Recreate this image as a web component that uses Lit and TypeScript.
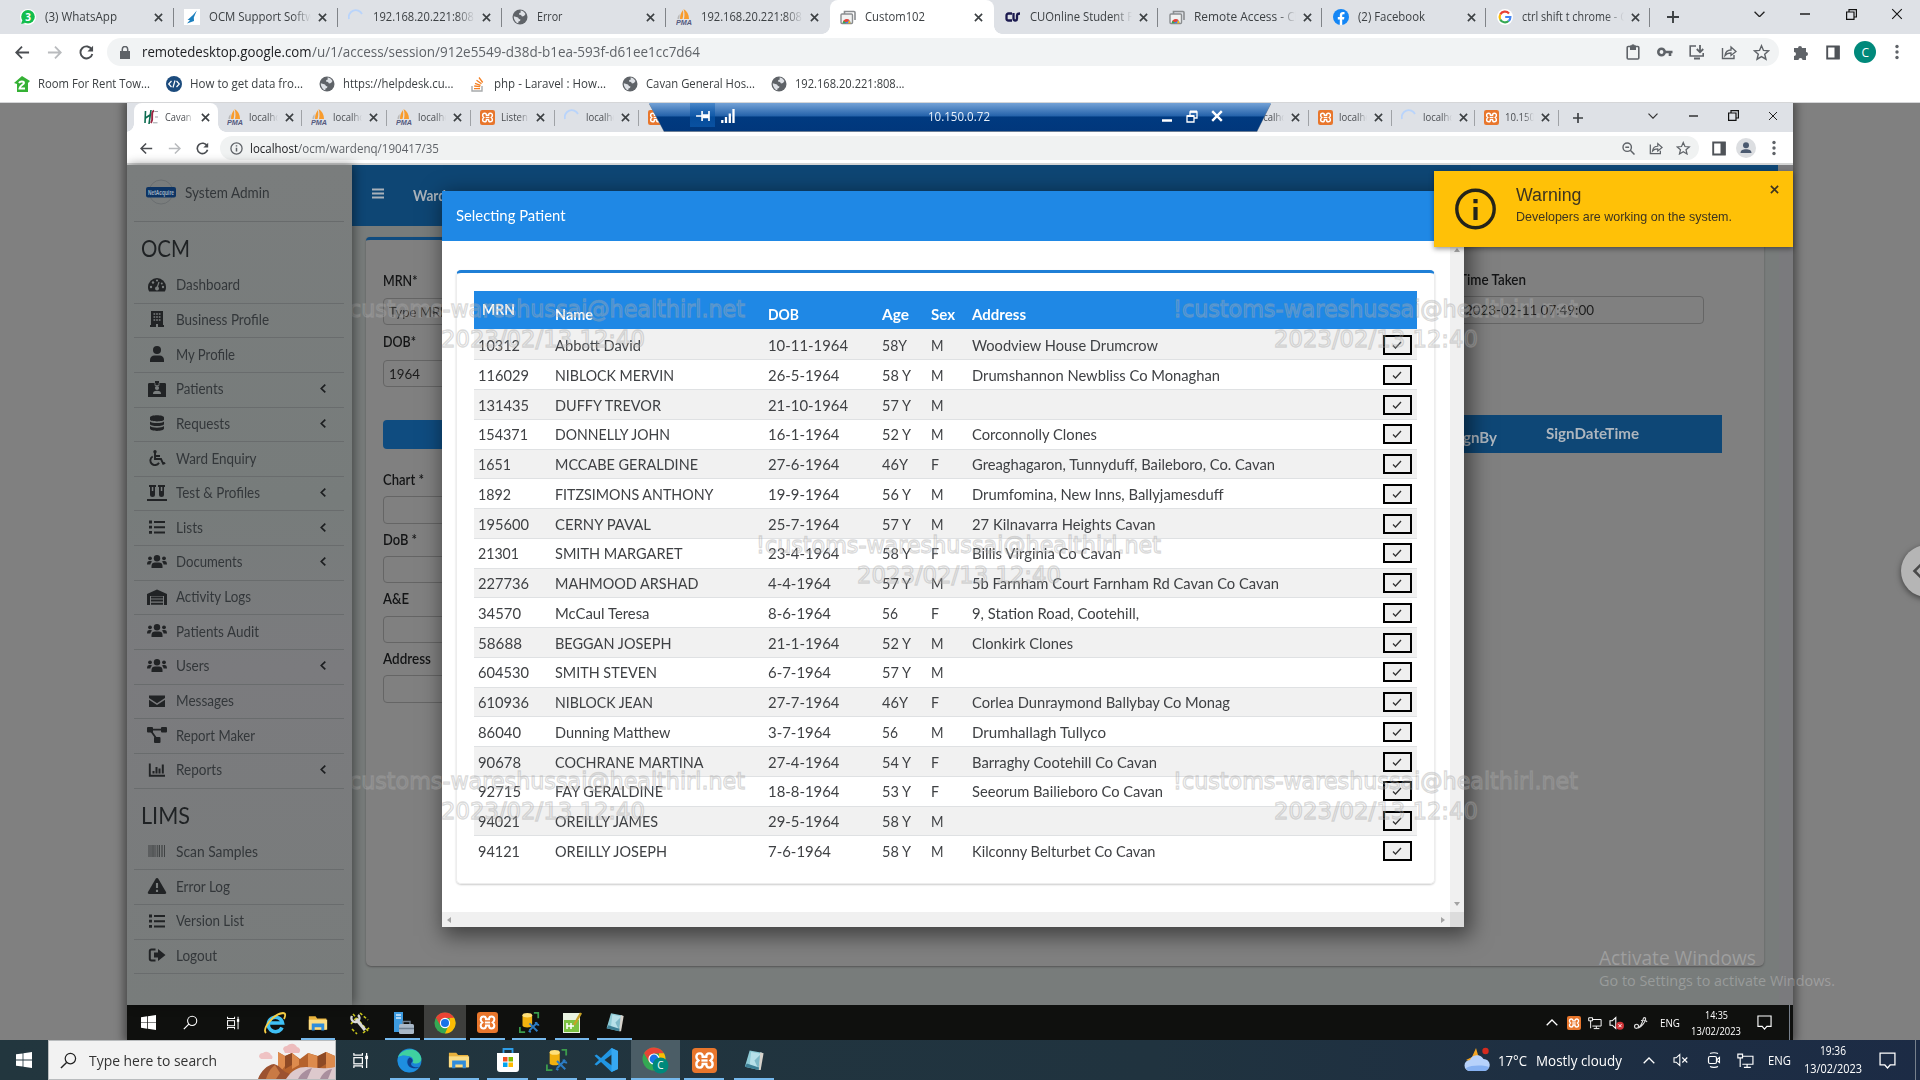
import { LitElement, html, css, svg, nothing } from "lit";
import { customElement } from "lit/decorators.js";
import { classMap } from "lit/directives/class-map.js";
import { styleMap } from "lit/directives/style-map.js";

/** Text set to a known advance width; the scale is worked out after rendering. */
const fit = (text: string, width: number, cls = "") =>
  html`<span class="fit ${cls}" data-w=${width} style=${styleMap({ width: width + "px" })}>${text}</span>`;

const icon = (w: number, h: number, box: string, body: unknown) =>
  html`<svg class="ic" width=${w} height=${h} viewBox=${box} fill="none">${body}</svg>`;

const xampp = (s: number) => icon(s, s, "0 0 24 24", svg`
  <rect width="24" height="24" rx="3.5" fill="#e8762c"/>
  <path d="M7.6 5.2c-2.8 0-3.4 1.500-3.400 3.400s.9 2.600 1.900 3.400c-1 .8-1.900 1.600-1.900 3.500s.7 3.300 3.400 3.300c2 0 2.700-1.700 2.700-3.400h3.400c0 1.700.7 3.400 2.700 3.400 2.700 0 3.400-1.400 3.400-3.300s-.9-2.700-1.900-3.500c1-.8 1.900-1.500 1.900-3.400s-.6-3.400-3.400-3.400c-2 0-2.700 1.500-2.700 3.200h-3.400c0-1.700-.7-3.200-2.700-3.200z" stroke="#fff" stroke-width="2.300"/>
  <path d="M9 12h6" stroke="#fff" stroke-width="2.200"/>`);
const pma = () => icon(16, 16, "0 0 16 16", svg`
  <path d="M4 10C4 6 5 3.500 7 1c.5 3 .3 6.500-.5 9zM8 10c.8-4 .6-7-.5-10C11 2 13 5.500 13 10z" fill="#f89c2e"/><path d="M1.500 10c0-2 .7-3.500 2-5 .2 2 .1 3.500-.3 5z" fill="#b9b9b9"/>
  <text x="0" y="15.500" font-family="Liberation Sans" font-weight="bold" font-style="italic" font-size="6.500" textLength="16" lengthAdjust="spacingAndGlyphs" fill="#555a80">PMA</text>`);
const spinner = () => icon(16, 16, "0 0 16 16", svg`<path d="M1 10a7 7 0 0 1 13-5" stroke="#b9d4fb" stroke-width="1.800"/>`);
const globe = () => icon(16, 16, "0 0 16 16", svg`
  <circle cx="8" cy="8" r="7.500" fill="#5f6368"/><path d="M8.500 1.500c2 .2 4 1.500 5 3.500l-1.500 2-2 .5-1-1.500-2-.5.300-1.500 1.500-.5zM1.800 7.200l4.200 1.300 1 1.500 1.500.5-.5 1.500-1.500.5-.3 1.800C3.800 13.500 1.700 10.700 1.800 7.200z" fill="#dee1e6"/>`);
const remote = () => icon(16, 16, "0 0 16 16", svg`
  <path d="M4.500 11V2.500h9.500a1 1 0 0 1 1 1V11" stroke="#8a8d90" stroke-width="1.600"/><rect x="1" y="5" width="11.500" height="9.500" rx="1" fill="#f1f1f1" stroke="#8a8d90" stroke-width="1.400"/>
  <path d="M3.500 14a3.500 3.500 0 0 1 7 0z" fill="#4285f4"/><path d="M2.800 13.500c.3-3 4-4.500 6.700-2.500L7 13z" fill="#ea4335"/><path d="M2.800 13.500l1-2L6 14.200H3z" fill="#34a853"/><path d="M9 11.200c1 .8 1.500 1.800 1.500 3H8z" fill="#fbbc04"/>`);
const chrome = (s: number) => icon(s, s, "0 0 24 24", svg`
  <circle cx="12" cy="12" r="11.500" fill="#34a853"/><path d="M12 12 2.040 6.250A11.500 11.500 0 0 1 21.960 6.250L22 6.500H12z" fill="#ea4335"/>
  <path d="M21.960 6.250A11.500 11.500 0 0 1 12 23.500L17 12V6.500z" fill="#fbbc04"/><path d="M2.040 6.250 7.200 15l4.800-3z" fill="#ea4335"/>
  <circle cx="12" cy="12" r="5.600" fill="#fff"/><circle cx="12" cy="12" r="4.400" fill="#1a73e8"/>`);
const explorer = (s: number) => icon(s, s, "0 0 24 24", svg`
  <path d="M1 4h8l2 2.500h11V20H1z" fill="#e9b23d"/><path d="M1 8h22v12H1z" fill="#fcdd84"/><path d="M4.500 21v-8.500h15V21H16v-4H8v4z" fill="#2f8ddb"/>`);
const notepad = (s: number) => icon(s, s, "0 0 24 24", svg`
  <path d="M8 1.500 21 4l-3.500 18L3 18.500z" fill="#8ecbd6"/><path d="M9.500 3 20 5l-3 15.500L8 17z" fill="#b7e0e9"/><path d="M13 12 20 5l-3 15.500z" fill="#7fb9c8"/><path d="M3 18.500 17.500 22l1-2.500L5 15z" fill="#3d7f95"/><path d="m19 3.500 3.500 1L19.500 22h-2z" fill="#d7d3cc"/>`);
const dbtools = (s: number) => icon(s, s, "0 0 24 24", svg`
  <path d="M4 3.500v12c0 3 11 3 11 0v-12z" fill="#f2b10f"/><ellipse cx="9.500" cy="3.700" rx="5.500" ry="2.500" fill="#ffe07a"/>
  <path d="M17 1h5v6M1 17v6h6" stroke="#3b9b4c" stroke-width="2"/><path d="m12 21 9-9m-9 1 9 9" stroke="#2c7cc4" stroke-width="2.200"/><path d="M19 11.500a3 3 0 0 0 4 3M11 21.500l2.500 1.500" stroke="#2c7cc4" stroke-width="2"/>`);
const winlogo = (s: number) => icon(s, s, "0 0 16 16", svg`<path d="M0 2.300 6.600 1.400v6.200H0zM7.400 1.300 16 0v7.600H7.400zM0 8.400h6.600v6.200L0 13.700zM7.400 8.400H16V16l-8.600-1.300z" fill="#fff"/>`);
const lens = (s: number, c: string) => icon(s, s, "0 0 18 18", svg`<circle cx="11" cy="7" r="5.500" stroke=${c} stroke-width="1.300"/><path d="M7 11 1 17" stroke=${c} stroke-width="1.500"/>`);
const taskview = (s: number) => icon(s, s, "0 0 18 18", svg`<rect x="2" y="6" width="9" height="6.500" stroke="#fff" stroke-width="1.300"/><path d="M2 1v2.200h9V1M2 17v-2.200h9V17M15.500 1v16" stroke="#fff" stroke-width="1.300"/><rect x="14" y="4" width="3" height="3.500" fill="#fff"/>`);
const cross = (s: number, c = "#3c4043", w = 1.8) => icon(s, s, "0 0 10 10", svg`<path d="m1 1 8 8m0-8-8 8" stroke=${c} stroke-width=${w}/>`);
const dots = (c = "#5f6368") => icon(4, 16, "0 0 4 16", svg`<circle cx="2" cy="2.500" r="1.700" fill=${c}/><circle cx="2" cy="8" r="1.700" fill=${c}/><circle cx="2" cy="13.500" r="1.700" fill=${c}/>`);
const arrow = (s: number, c: string, flip = false) => icon(s, s, "0 0 16 16", svg`<path d=${flip ? "M1 8h13M8.500 1.800 14.700 8l-6.200 6.200" : "M15 8H2M7.500 1.800 1.300 8l6.200 6.200"} stroke=${c} stroke-width="1.900"/>`);
const reload = (s: number) => icon(s, s, "0 0 16 16", svg`<path d="M13.700 5A6.400 6.400 0 1 0 14.200 9.500" stroke="#4a4d51" stroke-width="2"/><path d="M15 .8v6H9z" fill="#4a4d51"/>`);
const star = (s = 17) => icon(s, s, "0 0 18 18", svg`<path d="m9 1.800 2.100 5 5.400.5-4.100 3.500 1.300 5.300L9 13.300l-4.700 2.800 1.300-5.300-4.100-3.500 5.400-.5z" stroke="#5f6368" stroke-width="1.500"/>`);
const share = (s = 16) => icon(s, s, "0 0 16 16", svg`<path d="M1.500 4v10.500H13V11" stroke="#5f6368" stroke-width="1.400"/><path d="M4 11.500c.5-4 3-5.500 6-5.500V3l5 4.500-5 4V9c-2.500 0-4.500.5-6 2.500z" stroke="#5f6368" stroke-width="1.300"/>`);
const panel = () => icon(14, 15, "0 0 14 15", svg`<path d="M1.200 1.500h11.600v12H1.200z" stroke="#4f5358" stroke-width="1.900"/><path d="M8.500 1h5v13h-5z" fill="#4f5358"/>`);
const clipboard = () => icon(14, 16, "0 0 14 16", svg`<rect x="1.200" y="2.500" width="11.600" height="12.500" rx="1" stroke="#5f6368" stroke-width="1.600"/><path d="M4 1.500h6V6H4z" fill="#5f6368"/><circle cx="7" cy="2" r="1.800" fill="#5f6368"/>`);
const key = () => icon(16, 10, "0 0 16 10", svg`<circle cx="4.500" cy="5" r="3.200" stroke="#5f6368" stroke-width="2.600"/><path d="M8 5h7.500M13 5v4" stroke="#5f6368" stroke-width="2.600"/>`);
const install = () => icon(16, 16, "0 0 16 16", svg`<path d="M7 2H1.200v10h13V9" stroke="#5f6368" stroke-width="1.600"/><path d="M5 14.500h6" stroke="#5f6368" stroke-width="2"/><path d="M11 1v6M7.800 5 11 8.300 14.200 5" stroke="#5f6368" stroke-width="1.800"/>`);
const puzzle = () => icon(16, 16, "0 0 16 16", svg`<path d="M1 4h4a2 2 0 1 1 4 0h4v4a2 2 0 1 1 0 4v4H9.500a2 2 0 1 0-4 0H1v-4a2 2 0 1 0 0-4z" fill="#5f6368"/>`);
const down = (w: number, c: string) => icon(w, w * 0.6, "0 0 10 6", svg`<path d="m.5.7 4.500 4.500L9.500.7" stroke=${c} stroke-width="1.200"/>`);
const up = (c = "#fff") => icon(12, 7, "0 0 12 7", svg`<path d="M.7 6.300 6 1l5.300 5.300" stroke=${c} stroke-width="1.300"/>`);
const minus = (w: number) => icon(w, 2, "0 0 10 2", svg`<path d="M0 1h10" stroke="#111" stroke-width="1.400"/>`);
const restore = () => icon(11, 11, "0 0 11 11", svg`<path d="M.6 3h7.400v7.400H.6zM3 3V.6h7.400V8H8" stroke="#111" stroke-width="1.200"/>`);
const notif = (s: number) => icon(s, s, "0 0 16 16", svg`<path d="M1 1h14v11.200h-4.500L8 15l-2.500-2.800H1z" stroke="#fff" stroke-width="1.200"/>`);
const net = (s: number) => icon(s, s, "0 0 16 16", svg`<path d="M5 4h10v7.500H5M9.500 11.500V14M6.500 14.400h6.500M.8 2h4.400v3.500H.8zM3 5.500V14" stroke="#fff" stroke-width="1.100"/>`);
const mute = (red: boolean) => icon(15, 14, "0 0 15 14", svg`<path d="M1 4.800h2.200L6.800 1.500v11L3.200 9.200H1z" stroke="#fff" stroke-width="1.100"/>${red
  ? svg`<circle cx="11" cy="9.700" r="4" fill="#d13438"/><path d="m9.500 8.200 3 3m0-3-3 3" stroke="#fff"/>`
  : svg`<path d="m9.300 4.500 5 5m0-5-5 5" stroke="#fff" stroke-width="1.100"/>`}`);

const glyph: Record<string, unknown> = {
  dash: svg`<path d="M1 10a9 9 0 0 1 18 0c0 1.800-.4 3.200-1.200 4.500H2.200C1.400 13.200 1 11.800 1 10z" fill="#212325"/><g fill="#7b7f7f"><circle cx="4" cy="10" r="1.200"/><circle cx="6" cy="5.500" r="1.200"/><circle cx="10" cy="3.500" r="1.100"/><circle cx="16" cy="10" r="1.200"/><circle cx="14.800" cy="6.500" r="1"/><circle cx="10" cy="11.500" r="2"/></g><path d="m10 11 2-6" stroke="#7b7f7f" stroke-width="1.200"/>`,
  building: svg`<path d="M4 0h12v14h1v2h-6v-3H9v3H3v-2h1z" fill="#212325"/><path d="M6.500 3h7M6.500 6h7M6.500 9h7" stroke="#7b7f7f" stroke-width="1.700" stroke-dasharray="1.700 .950"/>`,
  user: svg`<circle cx="10" cy="4" r="4" fill="#212325"/><path d="M3 16v-2c0-3 2-4.500 4.500-4.500h5C15 9.500 17 11 17 14v2z" fill="#212325"/>`,
  badge: svg`<path d="M1 3.500C1 2.500 1.500 2 2.500 2H8V0h4v2h5.500c1 0 1.500.5 1.500 1.500V16H1z" fill="#212325"/><circle cx="10" cy="7" r="2.100" fill="#7b7f7f"/><path d="M6 13c0-2.500 1-3.300 4-3.300s4 .8 4 3.300z" fill="#7b7f7f"/><path d="M8 2v2.500h4V2" stroke="#7b7f7f" stroke-width=".800"/>`,
  db: svg`<path d="M3 2.500C3-.5 17-.5 17 2.500v2C17 7 3 7 3 4.500zM3 6.500c2 2 12 2 14 0V9c0 2.700-14 2.700-14 0zM3 11c2 2.200 12 2.200 14 0v2.500c0 3.200-14 3.200-14 0z" fill="#212325"/>`,
  wheel: svg`<circle cx="8" cy="1.700" r="1.700" fill="#212325"/><path d="M8 3v6h6l2.200 4.800 2-1M8.500 6H13M5.700 6.500A4.600 4.600 0 1 0 12 12.700" stroke="#212325" stroke-width="1.900"/>`,
  vials: svg`<path d="M2 0h7v2H8v7.500a2.500 2.500 0 0 1-5 0V2H2zM11 0h7v2h-1v7.500a2.500 2.500 0 0 1-5 0V2h-1zM0 14h20v2H0z" fill="#212325"/><path d="M4.800 2h1.500v4H4.800zM13.800 2h1.500v4h-1.500z" fill="#7b7f7f"/>`,
  list: svg`<path d="M2 3h3M2 8.200h3M2 13.400h3" stroke="#212325" stroke-width="2.800"/><path d="M7 3h11M7 8.200h11M7 13.400h11" stroke="#212325" stroke-width="2"/>`,
  users: svg`<circle cx="10" cy="4.300" r="3.200" fill="#212325"/><circle cx="3" cy="4.300" r="1.900" fill="#212325"/><circle cx="17" cy="4.300" r="1.900" fill="#212325"/><path d="M4.500 14v-2c0-2.500 1.500-3.500 3.500-3.500h4c2 0 3.500 1 3.500 3.500v2zM0 10.500C0 8 .8 7 2.500 7c1.500 0 2.200.3 2.700.8C4 8.600 3.600 9.300 3.400 10.500zM20 10.500C20 8 19.200 7 17.500 7c-1.500 0-2.200.3-2.700.8 1.200.8 1.600 1.500 1.800 2.700z" fill="#212325"/>`,
  store: svg`<path d="M0 5 10 .5 20 5v11h-3V7H3v9H0z" fill="#212325"/><path d="M4 8.500h12M4 11.500h12M4 14.800h12" stroke="#212325" stroke-width="2"/>`,
  mail: svg`<path d="M2 2.500h16V5l-8 5.200L2 5zM2 6.700l8 5.200 8-5.200V14H2z" fill="#212325"/>`,
  flow: svg`<rect x="0" y="0" width="6" height="5.500" rx="1" fill="#212325"/><rect x="14" y="0" width="6" height="5.500" rx="1" fill="#212325"/><rect x="7" y="10" width="6.500" height="6" rx="1" fill="#212325"/><path d="M5 2.700h10M4 4l5 7" stroke="#212325" stroke-width="1.800"/>`,
  chart: svg`<path d="M2.800 1.500v12.200H18" stroke="#212325" stroke-width="1.900"/><path d="M6.500 11.500V9M9.500 11.500V5M12.500 11.500v-5M15.800 11.500V2.500" stroke="#212325" stroke-width="2"/>`,
  bar: svg`<path d="M2 2v12M4 2v12M8 2v12M12.500 2v12M17.500 2v12" stroke="#404344" stroke-width="1"/><path d="M6 2v12M10.500 2v12M15 2v12" stroke="#505354" stroke-width="1.700"/>`,
  warn: svg`<path d="M10 0c.7 0 1 .3 1.300.8L19 14c.6 1.200 0 2-1.200 2H2.200C1 16 .4 15.200 1 14L8.700.8C9 .3 9.300 0 10 0z" fill="#212325"/><path d="M10 5v5M10 11.700v2.200" stroke="#7b7f7f" stroke-width="2.100"/>`,
  out: svg`<path d="M8.500 2.500h-4c-1.200 0-1.700.5-1.700 1.700v7.500c0 1.200.5 1.700 1.700 1.700h4" stroke="#212325" stroke-width="2"/><path d="M7 5.500h4V2l7.500 6-7.500 6v-3.500H7z" fill="#212325"/>`,
};

type Item = [string, string, number, boolean?];
const OCM: Item[] = [
  ["dash", "Dashboard", 64], ["building", "Business Profile", 93], ["user", "My Profile", 59], ["badge", "Patients", 47.5, true],
  ["db", "Requests", 54, true], ["wheel", "Ward Enquiry", 80.5], ["vials", "Test & Profiles", 84, true], ["list", "Lists", 27, true],
  ["users", "Documents", 66.5, true], ["store", "Activity Logs", 75], ["users", "Patients Audit", 83], ["users", "Users", 33.5, true],
  ["mail", "Messages", 58], ["flow", "Report Maker", 79], ["chart", "Reports", 46, true],
];
const LIMS: Item[] = [["bar", "Scan Samples", 82], ["warn", "Error Log", 54], ["list", "Version List", 68], ["out", "Logout", 41]];

type Row = [string, number, string, number, string, number, string, number, string, string, number];
const ROWS: Row[] = [
  ["10312", 42, "Abbott David", 86, "10-11-1964", 80, "58Y", 25, "M", "Woodview House Drumcrow", 186],
  ["116029", 51, "NIBLOCK MERVIN", 119, "26-5-1964", 71.5, "58 Y", 29, "M", "Drumshannon Newbliss Co Monaghan", 248],
  ["131435", 51, "DUFFY TREVOR", 106, "21-10-1964", 80, "57 Y", 29, "M", "", 0],
  ["154371", 50, "DONNELLY JOHN", 115, "16-1-1964", 71.5, "52 Y", 29, "M", "Corconnolly Clones", 125],
  ["1651", 33, "MCCABE GERALDINE", 143, "27-6-1964", 71.5, "46Y", 26, "F", "Greaghagaron, Tunnyduff, Baileboro, Co. Cavan", 303],
  ["1892", 33, "FITZSIMONS ANTHONY", 158.5, "19-9-1964", 71.5, "56 Y", 29, "M", "Drumfomina, New Inns, Ballyjamesduff", 251.5],
  ["195600", 51, "CERNY PAVAL", 96, "25-7-1964", 71.5, "57 Y", 29, "M", "27 Kilnavarra Heights Cavan", 183.5],
  ["21301", 41, "SMITH MARGARET", 127.5, "23-4-1964", 71.5, "58 Y", 29, "F", "Billis Virginia Co Cavan", 149],
  ["227736", 51, "MAHMOOD ARSHAD", 143.5, "4-4-1964", 63, "57 Y", 29, "M", "5b Farnham Court Farnham Rd Cavan Co Cavan", 307],
  ["34570", 43, "McCaul Teresa", 94.5, "8-6-1964", 63, "56", 16, "F", "9, Station Road, Cootehill,", 167],
  ["58688", 44, "BEGGAN JOSEPH", 116.5, "21-1-1964", 71.5, "52 Y", 29, "M", "Clonkirk Clones", 101],
  ["604530", 51, "SMITH STEVEN", 102, "6-7-1964", 63, "57 Y", 29, "M", "", 0],
  ["610936", 51, "NIBLOCK JEAN", 98, "27-7-1964", 71.5, "46Y", 26, "F", "Corlea Dunraymond Ballybay Co Monag", 258],
  ["86040", 43, "Dunning Matthew", 115.5, "3-7-1964", 63, "56", 16, "M", "Drumhallagh Tullyco", 134],
  ["90678", 43, "COCHRANE MARTINA", 148.5, "27-4-1964", 71.5, "54 Y", 29, "F", "Barraghy Cootehill Co Cavan", 185],
  ["92715", 43, "FAY GERALDINE", 108, "18-8-1964", 71.5, "53 Y", 29, "F", "Seeorum Bailieboro Co Cavan", 191],
  ["94021", 42, "OREILLY JAMES", 103, "29-5-1964", 71.5, "58 Y", 29, "M", "", 0],
  ["94121", 42, "OREILLY JOSEPH", 112, "7-6-1964", 63, "58 Y", 29, "M", "Kilconny Belturbet Co Cavan", 183.5],
];

const MARKS = [[543, 308], [1376, 308], [959, 544], [543, 780], [1376, 780]];

@customElement("app-root")
export class AppRoot extends LitElement {
  static styles = css`
    :host { display: block; width: 1920px; height: 1080px; overflow: hidden; position: relative; font-family: "Open Sans", "Noto Sans", sans-serif; color: #3c4043; }
    * { box-sizing: border-box; }
    .ic { display: block; flex: none; }
    .fit { display: inline-block; white-space: pre; transform-origin: 0 50%; flex: none; }
    .screen { display: flex; flex-direction: column; height: 1080px; }
    .row { display: flex; align-items: center; }
    .cell { display: flex; align-items: center; justify-content: center; flex: none; }

    .tabs { height: 34px; background: #dee1e6; padding-left: 9.5px; display: flex; font-size: 12px; flex: none; }
    .tab { width: 164.1px; height: 34px; display: flex; align-items: center; padding-left: 10.5px; position: relative; flex: none; }
    .tab .name { width: 102px; margin-left: 9px; overflow: hidden; white-space: pre; -webkit-mask-image: linear-gradient(90deg, #000 82%, transparent); line-height: 20px; }
    .tab .x { margin-left: 7px; }
    .tab.sep::after { content: ""; position: absolute; right: 0; top: 8px; width: 1px; height: 19px; background: #808388; }
    .tab.on { background: #fff; border-radius: 8px 8px 0 0; }
    .tab.on::before, .tab.on::after { content: ""; position: absolute; bottom: 0; width: 8px; height: 8px; }
    .tab.on::before { left: -8px; background: radial-gradient(circle at 0 0, transparent 7.5px, #fff 8px); }
    .tab.on::after { right: -8px; background: radial-gradient(circle at 100% 0, transparent 7.5px, #fff 8px); }
    .plus { width: 45px; }
    .ctl { width: 46px; height: 28px; }
    .gap { flex: 1; }

    .bar { height: 36px; background: #fff; display: flex; align-items: center; padding-left: 6px; flex: none; }
    .nav { width: 32.3px; }
    .omni { height: 28px; width: 1672px; margin-left: 4.5px; border-radius: 14px; background: #f1f3f4; display: flex; align-items: center; font-size: 14px; padding: 0 2px 0 10px; color: #5f6368; }
    .omni .fit { margin-top: -2px; }
    .omni .host { color: #202124; }
    .omni .lock { width: 16px; margin-right: 9px; }
    .b32 { width: 32px; height: 28px; }
    .ava { width: 22px; height: 22px; border-radius: 50%; background: #00897b; color: #fff; font-size: 12px; }
    .marks { height: 33px; background: #fff; border-bottom: 1px solid #d5d6d8; font-size: 12px; display: flex; align-items: center; padding: 0 0 4px 14px; flex: none; }
    .mark { display: flex; align-items: center; gap: 8.2px; margin-right: 15.9px; line-height: 18px; }

    .desk { flex: none; height: 937px; background: #808080; padding-left: 127px; position: relative; overflow: hidden; }
    .win { width: 1666px; height: 937px; display: flex; flex-direction: column; box-shadow: 0 0 9px 3px rgba(0, 0, 0, .45); position: relative; overflow: hidden; }
    .tabs.in { height: 29px; padding-left: 7px; }
    .in .tab { width: 84.2px; height: 29px; padding: 0 0 1px 9px; }
    .in .tab.r { width: 83.4px; }
    .in .tab .name { width: 28.5px; margin-left: 6px; font-size: 11px; color: #4a4d51; -webkit-mask-image: linear-gradient(90deg, #000 65%, transparent); }
    .in .tab .x { margin-left: 7px; }
    .in .tab.sep::after { top: 7px; height: 16px; background: #9fa2a6; }
    .in .ctl { width: 40px; height: 25px; }
    .in .fill { width: 502px; flex: none; }
    .bar.in2 { height: 33px; padding-left: 5px; border-bottom: 2px solid #d4d5d5; padding-top: 1px; }
    .in2 .nav { width: 28px; }
    .in2 .omni { height: 24px; width: 1479px; margin-left: 4px; font-size: 12.5px; background: #f0f2f2; padding: 0 2px 0 8px; }
    .in2 .omni .fit { margin-top: 0; }
    .in2 .b28 { width: 27.5px; height: 24px; }

    .page { height: 840px; display: flex; background: #787c7b; flex: none; font-family: Lato, "Open Sans", sans-serif; color: #2e3133; position: relative; }
    .side { width: 225px; background: linear-gradient(#7a7d7d, #777c7b 40%, #7b7b7e 60%, #787c7b); padding: 0 8px 0 7px; box-shadow: 2px 0 10px rgba(0, 0, 0, .45); z-index: 1; }
    .brand { height: 57px; border-bottom: 1.5px solid #686b6c; display: flex; align-items: center; gap: 9px; padding: 0 0 2px 12px; font-size: 15px; color: #33373a; }
    .sec { height: 47px; padding: 9px 0 0 7px; font-size: 24px; line-height: 34px; color: #1f2224; }
    .item { height: 34.65px; border-bottom: 1.5px solid #696c6d; display: flex; align-items: center; padding: 0 9px 2px 13px; font-size: 14.5px; color: #33373a; }
    .item .ic { margin-right: 9px; }
    .item .go .ic { margin: 0; }
    .item .go { margin: 0 9px 0 auto; }
    .main { flex: 1; display: flex; flex-direction: column; }
    .top { height: 61px; width: 1426px; background: #0e4674; display: flex; align-items: center; padding: 0 0 4px 20px; gap: 28.5px; color: #aab2ba; font-weight: 700; font-size: 15px; flex: none; }
    .card { margin: 11px 0 0 14px; width: 1398px; height: 729px; background: #808080; border-top: 3px solid #0f4c80; border-radius: 4px 4px 5px 5px; box-shadow: 0 1px 2px #555; display: flex; justify-content: space-between; padding: 30px 42px 0 17px; flex: none; }
    .form { width: 300px; font-size: 14px; }
    .lbl { font-weight: 600; color: #131415; font-size: 14.5px; height: 19px; line-height: 18px; padding-left: 0; }
    .box { height: 27.5px; border: 1px solid #656565; border-radius: 4px; padding: 0 5px; display: flex; align-items: center; color: #1c1c1c; }
    .go-btn { height: 29px; background: #0f4c80; border-radius: 4px; }
    .right { width: 360px; font-size: 14px; display: flex; flex-direction: column; }
    .strip { height: 38px; width: 360px; background: #0e4776; color: #aeb6be; font-weight: 700; font-size: 16px; display: flex; }
    .track { position: absolute; right: 0; top: 0; width: 14.5px; height: 840px; background: #7a7a7d; }

    .modal { position: absolute; left: 442px; top: 88px; width: 1022px; height: 736px; background: #fff; box-shadow: 4px 6px 20px 3px rgba(0, 0, 0, .5); font-family: Lato, "Open Sans", sans-serif; display: grid; grid-template-columns: 1fr 14.5px; grid-template-rows: 50px 1fr 15px; }
    .mhead { grid-column: 1 / 3; background: #1f88e5; color: #fff; font-size: 15px; padding: 0 0 3px 14px; display: flex; align-items: center; }
    .mbody { padding: 28.5px 15px 0 14px; overflow: hidden; }
    .panel { height: 614.5px; border: 1px solid #ededed; border-top: 3px solid #1f7fd6; border-radius: 5px; box-shadow: 0 1px 2px #ccc; padding: 18px 17px 0 17px; }
    .sv, .sh { background: #f0f0f0; display: flex; justify-content: space-between; align-items: center; }
    .sv { flex-direction: column; padding: 6px 0 5px; }
    .sh { padding: 0 4px; }
    .corner { background: #dcdcdc; }
    .tr { display: grid; grid-template-columns: 77px 212.5px 114px 49px 41.5px 1fr 33.5px; height: 29.75px; border-bottom: 1.2px solid #dfe1e3; padding-left: 4.4px; align-items: center; font-size: 15px; color: #3f4144; }
    .tr.odd { background: #f1f1f1; }
    .tr.first { height: 31.9px; padding-top: 2px; }
    .tr.last { border: 0; }
    .th { display: grid; grid-template-columns: 73px 212.5px 114px 49px 41.5px 1fr 33px; height: 38px; padding: 8px 0 0 8.4px; background: #1f88e5; color: #fff; font-weight: 700; font-size: 15px; align-items: center; }
    .th .up { margin-top: -9px; }
    .pick { width: 28.5px; height: 20px; border: 2px solid #000; background: #efefef; display: flex; align-items: center; justify-content: center; padding: 0; }

    .toast { position: absolute; left: 1434px; top: 68px; width: 359px; height: 76px; background: #ffc107; box-shadow: 0 2px 5px rgba(0, 0, 0, .4); font-family: "Liberation Sans", sans-serif; color: #3d3420; display: flex; padding: 17px 14px 0 21px; }
    .toast .txt { margin-left: 19.5px; flex: 1; margin-top: -3px; }
    .toast .ttl { font-size: 18px; line-height: 20px; height: 23px; }
    .toast .sub { font-size: 13px; line-height: 18px; }
    .toast .close { margin-top: -3px; }

    .rdp { position: absolute; left: 649px; top: 0; width: 622px; height: 29px; filter: drop-shadow(0 1px 0 #6d7f96); }
    .rdpin { height: 28px; clip-path: polygon(0 0, 100% 0, calc(100% - 14px) 100%, 15px 100%); background: linear-gradient(#74a2d6 0, #2563ab 46%, #003a80 50%, #01377c); display: grid; grid-template-columns: 41px 25px 25px 1fr 25px 25px 25px 42px; align-items: center; color: #e8f0fa; padding-bottom: 2px; }
    .pin { background: linear-gradient(rgba(0, 90, 180, .35), rgba(10, 84, 165, .9)); height: 24px; align-self: start; padding-top: 2px; }
    .rdpt { text-align: center; font-size: 12px; padding-left: 24px; }

    .tb1 { height: 35px; background: #0f100e; display: flex; align-items: center; position: relative; color: #fff; flex: none; }
    .tb1 .cell { width: 42.4px; height: 35px; }
    .tb1 .cell.run, .tb2 .cell.run { background: linear-gradient(#76b9ed, #76b9ed) bottom / 82% 2px no-repeat; }
    .tb1 .cell.act { background: linear-gradient(#76b9ed, #76b9ed) bottom / 100% 2px no-repeat, #3e3f3d; }
    .tray { margin-left: auto; display: flex; align-items: center; }
    .clock { text-align: center; display: flex; flex-direction: column; align-items: center; }
    .tb1 .clock { font-size: 11px; line-height: 15.5px; width: 56px; }
    .tb2 { height: 40px; background: linear-gradient(90deg, #22363e, #20333f 60%, #1c2b45); display: flex; align-items: center; color: #fff; flex: none; }
    .tb2 .start { width: 48px; }
    .search { width: 288px; height: 40px; background: #f2f2f2; border: 1px solid #b9bcbe; display: flex; align-items: center; padding-left: 11px; color: #333; font-size: 15px; gap: 12px; }
    .search .art { margin-left: auto; }
    .tb2 .app { width: 49.15px; height: 40px; }
    .tb2 .cell.act { background: linear-gradient(#76b9ed, #76b9ed) bottom / 100% 2px no-repeat, #4b5d66; }
    .tb2 .tray { font-size: 15px; }
    .tb2 .clock { font-size: 12px; line-height: 18.5px; width: 60px; }
    .peek { width: 1px; background: #77808c; }

    .over { position: absolute; left: 0; top: 0; width: 1920px; height: 1080px; pointer-events: none; }
    .side-toggle { position: absolute; left: 1901px; top: 442px; width: 52px; height: 52px; border-radius: 50%; background: #b5b5b5; box-shadow: 0 2px 6px rgba(0, 0, 0, .5); padding: 17px 0 0 11px; }
  `;

  protected firstUpdated() {
    this.renderRoot.querySelectorAll<HTMLElement>(".fit").forEach((el) => {
      const want = Number(el.dataset.w);
      el.style.width = "max-content";
      const have = el.getBoundingClientRect().width;
      el.style.width = want + "px";
      if (have) el.style.transform = `scaleX(${want / have})`;
    });
  }

  private tab(ic: unknown, text: string, w: number, opt = "") {
    return html`<div class="tab ${opt}">${ic}<span class="name">${fit(text, w)}</span><span class="x">${cross(9)}</span></div>`;
  }

  private chromeTop() {
    const wa = icon(16, 16, "0 0 16 16", svg`<circle cx="8" cy="8" r="8" fill="#fff"/><circle cx="8" cy="7.800" r="6.800" fill="#12bd4c"/><path d="m1.200 15 1.200-4 3 3z" fill="#12bd4c"/><text x="8" y="11.500" font-size="10" font-weight="bold" text-anchor="middle" fill="#fff" font-family="Open Sans">3</text>`);
    const ocm = icon(16, 16, "0 0 16 16", svg`<rect width="16" height="16" fill="#fff"/><path d="M12.800 1.500 9.800 8.500 10 12 3 14.500l3-3.500H3.500L9 6z" fill="#1c7fbe"/>`);
    const cu = icon(16, 16, "0 0 16 16", svg`<path d="M7 4.500H3.500A2 2 0 0 0 1.500 6.500v3a2 2 0 0 0 2 2H7M8.500 4v5.500c0 1.300.7 2 1.800 2s1.700-.7 1.700-2V6.500c0-1.300.8-2 3-2" stroke="#1c1a4f" stroke-width="2.300"/>`);
    const fb = icon(16, 16, "0 0 16 16", svg`<circle cx="8" cy="8" r="8" fill="#1486f5"/><path d="M6.800 16v-5.500h-2V8h2V6.200c0-2.200 1.300-3.300 3.200-3.300l1.500.1v2.200h-1c-1 0-1.300.5-1.300 1.200V8h2.200l-.4 2.500H9.200V16z" fill="#fff"/>`);
    const goog = icon(16, 16, "0 0 16 16", svg`<circle cx="8" cy="8" r="8" fill="#fff"/><g stroke-width="2.200"><path d="M12 4.400A5.400 5.400 0 0 0 3.200 5.600" stroke="#ea4335"/><path d="M3.200 5.600a5.400 5.400 0 0 0 0 4.800" stroke="#fbbc04"/><path d="M3.200 10.400a5.400 5.400 0 0 0 8.400 1.600" stroke="#34a853"/><path d="M11.600 12a5.200 5.200 0 0 0 1.800-4H8.200" stroke="#4285f4"/></g>`);
    return html`
      <div class="tabs">
        ${this.tab(wa, "(3) WhatsApp", 72, "sep")}${this.tab(ocm, "OCM Support Softw", 105, "sep")}${this.tab(spinner(), "192.168.20.221:808", 101, "sep")}
        ${this.tab(globe(), "Error", 25.5, "sep")}${this.tab(pma(), "192.168.20.221:808", 101)}${this.tab(remote(), "Custom102", 60, "on")}
        ${this.tab(cu, "CUOnline Student P", 104, "sep")}${this.tab(remote(), "Remote Access - Ch", 108, "sep")}${this.tab(fb, "(2) Facebook", 67, "sep")}${this.tab(goog, "ctrl shift t chrome - G", 106, "sep")}
        <div class="cell plus">${icon(12, 12, "0 0 12 12", svg`<path d="M6 0v12M0 6h12" stroke="#3c4043" stroke-width="1.900"/>`)}</div>
        <div class="gap"></div>
        <div class="cell ctl">${down(11, "#222")}</div><div class="cell ctl">${minus(10)}</div><div class="cell ctl">${restore()}</div><div class="cell ctl">${cross(12, "#111", 0.9)}</div>
      </div>
      <div class="bar">
        <div class="cell nav">${arrow(15, "#4a4d51")}</div><div class="cell nav">${arrow(15, "#b9bbbe", true)}</div><div class="cell nav">${reload(15)}</div>
        <div class="omni">
          <span class="cell lock">${icon(10, 13, "0 0 10 13", svg`<path d="M0 5h10v8H0z" fill="#5f6368"/><path d="M2.300 5V3.200a2.700 2.700 0 0 1 5.400 0V5" stroke="#5f6368" stroke-width="1.500"/>`)}</span>
          ${fit("remotedesktop.google.com", 169.5, "host")}${fit("/u/1/access/session/912e5549-d38d-b1ea-593f-d61ee1cc7d64", 388)}
          <span class="gap"></span>
          ${[clipboard(), key(), install(), share(), star()].map((i) => html`<span class="cell b32">${i}</span>`)}
        </div>
        <div class="row gap" style="padding-left:6px">
          <span class="cell b32">${puzzle()}</span><span class="cell b32">${panel()}</span><span class="cell b32"><span class="cell ava">C</span></span><span class="cell b32">${dots()}</span>
        </div>
      </div>`;
  }

  private bookmarks() {
    const house = icon(16, 16, "0 0 16 16", svg`<path d="M0 7 8 0l8 5-2 2v9H3V8z" fill="#35b135"/><path d="M5 7c1-2 5-2 5 0 0 1.500-4 2.500-4.500 5.500H11" stroke="#fff" stroke-width="1.900"/>`);
    const code = icon(16, 16, "0 0 16 16", svg`<circle cx="8" cy="8" r="8" fill="#1c4b7d"/><path d="M5.500 5 2.700 8l2.800 3M10.500 5l2.800 3-2.800 3M9 4.500l-2 7" stroke="#fff" stroke-width="1.200"/>`);
    const so = icon(16, 16, "0 0 16 16", svg`<path d="M2 10v5h10v-5" stroke="#a8aaac" stroke-width="1.400"/><path d="M4 12.700h6M4.200 10l6 .7M5 7.300l5.600 2M6.500 4.300l5 3.500M9 1.500l3.700 5" stroke="#f48024" stroke-width="1.300"/>`);
    const list: [unknown, string, number][] = [
      [house, "Room For Rent Tow...", 112], [code, "How to get data fro...", 113], [globe(), "https://helpdesk.cu...", 110.5],
      [so, "php - Laravel : How...", 112], [globe(), "Cavan General Hos...", 109], [globe(), "192.168.20.221:808...", 109.5]];
    return html`<div class="marks">${list.map(([i, t, w]) => html`<div class="mark">${i}${fit(t, w)}</div>`)}</div>`;
  }

  private innerTop() {
    const hse = icon(16, 16, "0 0 16 16", svg`<path d="M2.500 2 2 14M2.500 9l4.500-3M8 1 6 15" stroke="#0b6b4f" stroke-width="1.600"/><path d="M11 1.500C6.500 4 11.500 8 8 14" stroke="#9b2743" stroke-width="1.900"/><path d="M11.500 2.500h3.500M12 8h3M10 13.800h4.500" stroke="#9aa0a6" stroke-width="1"/>`);
    return html`
      <div class="tabs in">
        ${this.tab(hse, "Cavan ", 29, "on")}${this.tab(pma(), "localho", 32, "sep")}${this.tab(pma(), "localho", 32, "sep")}${this.tab(pma(), "localho", 32, "sep")}
        ${this.tab(xampp(15), "Listen", 27, "sep")}${this.tab(spinner(), "localho", 32, "sep")}${this.tab(xampp(15), "localho", 32)}
        <div class="fill"></div>
        ${this.tab(xampp(15), "localho", 32, "sep r")}${this.tab(xampp(15), "localho", 32, "sep r")}${this.tab(spinner(), "localho", 32, "sep r")}${this.tab(xampp(15), "10.150", 30, "sep r")}
        <div class="cell" style="width:38px">${icon(10, 10, "0 0 12 12", svg`<path d="M6 0v12M0 6h12" stroke="#3c4043" stroke-width="2"/>`)}</div>
        <div class="gap"></div>
        <div class="cell ctl">${down(10, "#333")}</div><div class="cell ctl">${minus(9)}</div><div class="cell ctl">${restore()}</div><div class="cell ctl">${cross(10, "#222", 1)}</div>
      </div>
      <div class="bar in2">
        <div class="cell nav">${arrow(13, "#4a4d51")}</div><div class="cell nav">${arrow(13, "#b9bbbe", true)}</div><div class="cell nav">${reload(13)}</div>
        <div class="omni">
          <span class="cell lock">${icon(13, 13, "0 0 14 14", svg`<circle cx="7" cy="7" r="6" stroke="#5f6368" stroke-width="1.400"/><path d="M7 6.300v4M7 3.500v1.400" stroke="#5f6368" stroke-width="1.600"/>`)}</span>
          <span style="margin-left:-3px">${fit("localhost", 48, "host")}</span>${fit("/ocm/wardenq/190417/35", 141)}
          <span class="gap"></span>
          <span class="cell b28">${icon(13, 13, "0 0 13 13", svg`<circle cx="5.200" cy="5.200" r="4.200" stroke="#5f6368" stroke-width="1.400"/><path d="M8.300 8.300 12.500 12.500M3.300 5.200h3.800" stroke="#5f6368" stroke-width="1.500"/>`)}</span>
          <span class="cell b28">${share(14)}</span><span class="cell b28">${star(14.5)}</span>
        </div>
        <div class="row gap" style="padding-left:6px">
          <span class="cell b28">${panel()}</span><span class="cell b28">${icon(20, 20, "0 0 20 20", svg`<circle cx="10" cy="10" r="10" fill="#dcdee1"/><circle cx="10" cy="7.200" r="3" fill="#4b5a70"/><path d="M4.500 15c0-3 2.500-3.800 5.500-3.800s5.500.8 5.500 3.800z" fill="#4b5a70"/>`)}</span><span class="cell b28">${dots()}</span>
        </div>
      </div>`;
  }

  private items(list: Item[]) {
    return list.map(([g, t, w, sub]) => html`<div class="item">${icon(20, 16, "0 0 20 16", glyph[g])}${fit(t, w)}${sub
      ? html`<span class="go">${icon(6, 9, "0 0 6 9", svg`<path d="M5.300.7 1.300 4.500l4 3.800" stroke="#1c1e20" stroke-width="1.700"/>`)}</span>` : nothing}</div>`);
  }

  private page() {
    return html`<div class="page">
      <div class="side">
        <div class="brand">${icon(30, 26, "0 0 30 26", svg`<circle cx="15" cy="13" r="12" stroke="#6a6e70" stroke-width="1"/><rect y="8" width="30" height="10.500" rx="2" fill="#0d3464"/><text x="2" y="16" font-family="Liberation Sans" font-weight="bold" font-size="7.500" textLength="26" lengthAdjust="spacingAndGlyphs" fill="#9fb0c0">NetAcquire</text>`)}${fit("System Admin", 84.5)}</div>
        <div class="sec">${fit("OCM", 49)}</div>${this.items(OCM)}
        <div class="sec">${fit("LIMS", 49)}</div>${this.items(LIMS)}
      </div>
      <div class="main">
        <div class="top">${icon(12, 11, "0 0 12 11", svg`<path d="M0 1.500h12M0 5.500h12M0 9.500h12" stroke="#aab2ba" stroke-width="1.900"/>`)}<span style="padding-top:3px">${fit("Ward", 33)}</span></div>
        <div class="card">
          <div class="form">
            <div class="lbl" style="margin-top:1.5px">${fit("MRN*", 34.5)}</div><div class="box" style="margin-top:7px;color:#333">${fit("Type MRN", 61)}</div>
            <div class="lbl" style="margin-top:8px">${fit("DOB*", 33)}</div><div class="box" style="margin-top:7.5px">${fit("1964", 31)}</div>
            <div class="go-btn" style="margin-top:33px"></div>
            <div class="lbl" style="margin-top:22px">${fit("Chart *", 41)}</div><div class="box" style="margin-top:6px"></div>
            <div class="lbl" style="margin-top:7px">${fit("DoB *", 34)}</div><div class="box" style="margin-top:6px"></div>
            <div class="lbl" style="margin-top:6.5px">${fit("A&E", 26)}</div><div class="box" style="margin-top:7px"></div>
            <div class="lbl" style="margin-top:7px">${fit("Address", 48)}</div><div class="box" style="margin-top:6px"></div>
          </div>
          <div class="right">
            <div class="lbl" style="padding:1px 0 0 97px;height:20px">${fit("Time Taken", 67)}</div>
            <div class="box" style="margin:6px 0 0 59px;width:283px;padding-left:43px">${fit("2023-02-11 07:49:00", 129)}</div>
            <div class="strip" style="margin-top:91.5px"><span style="padding:12px 0 0 89px">${fit("SignBy", 46)}</span><span style="padding:8px 0 0 49px">${fit("SignDateTime", 93)}</span></div>
          </div>
        </div>
      </div>
      <div class="track"></div>
    </div>`;
  }

  private modal() {
    const tri = (d: string) => icon(6, 6, "0 0 6 6", svg`<path d=${d} fill="#a3a3a3"/>`);
    const check = icon(10, 8, "0 0 10 8", svg`<path d="m1 4.500 2.500 2.500L9 1" stroke="#333" stroke-width="1.300"/>`);
    return html`<div class="modal">
      <div class="mhead">${fit("Selecting Patient", 109.5)}</div>
      <div class="mbody"><div class="panel">
        <div class="th"><span class="up">${fit("MRN", 33)}</span>${fit("Name", 38)}${fit("DOB", 31)}${fit("Age", 27)}${fit("Sex", 24)}${fit("Address", 54)}</div>
        ${ROWS.map((r, i) => html`<div class=${classMap({ tr: true, odd: i % 2 === 0, first: i === 0, last: i === ROWS.length - 1 })}>
          ${fit(r[0], r[1])}${fit(r[2], r[3])}${fit(r[4], r[5])}${fit(r[6], r[7])}${fit(r[8], r[8] === "M" ? 12.5 : 8)}${fit(r[9], r[10])}<button class="pick">${check}</button>
        </div>`)}
      </div></div>
      <div class="sv">${tri("M0 5 3 1l3 4z")}${tri("M0 1h6L3 5z")}</div>
      <div class="sh">${tri("M5 0v6L1 3z")}${tri("M1 0v6l4-3z")}</div>
      <div class="corner"></div>
    </div>`;
  }

  private rdp() {
    return html`<div class="rdp"><div class="rdpin">
      <span></span><span class="cell pin">${icon(14, 12, "0 0 15 13", svg`<path d="M0 6.500h6M6.500 1v11M14 1v11" stroke="#fff" stroke-width="1.800"/><path d="M7 4.500h7v4.500H7z" fill="#fff"/>`)}</span>
      <span class="cell">${icon(14, 14, "0 0 14 14", svg`<path d="M1.300 14v-3M5 14V8M8.800 14V4.500M12.500 14V0" stroke="#fff" stroke-width="2.300"/>`)}</span>
      <span class="rdpt">${fit("10.150.0.72", 62)}</span>
      <span class="cell">${icon(10, 11, "0 0 10 11", svg`<path d="M0 9.500h10" stroke="#fff" stroke-width="2.600"/>`)}</span>
      <span class="cell">${icon(12, 13, "0 0 12 13", svg`<path d="M1 6h7v6H1zM4 5V2h7v6H8" stroke="#fff" stroke-width="1.300"/><path d="M1 6h7M4 1.500h7" stroke="#fff" stroke-width="2.200"/>`)}</span>
      <span class="cell">${cross(12, "#fff", 2)}</span><span></span>
    </div></div>`;
  }

  private innerTaskbar() {
    const ie = icon(24, 24, "0 0 24 24", svg`<path d="M19 16.500A7.200 7.200 0 1 1 19.500 12H6" stroke="#3fc0f5" stroke-width="3.600"/><path d="M3 22C-1 18 10 3 20 2c3 0 2.500 3 1 6" stroke="#f8cf46" stroke-width="1.800"/>`);
    const wrench = icon(24, 24, "0 0 24 24", svg`<path d="m5 3 15 17M3 13l5-6m4-5 8 7M4 18l5 5m6-1 7-6" stroke="#c9c71c" stroke-width="1.600" stroke-dasharray="3 2"/><path d="m8 8 9 11" stroke="#d8d8d8" stroke-width="3.200"/><path d="M4 5a4 4 0 1 0 6-1" stroke="#d8d8d8" stroke-width="2.400"/>`);
    const server = icon(24, 24, "0 0 24 24", svg`<path d="M3 1h9v20H3z" fill="#3d9be0"/><path d="M5 4h5M5 7h5" stroke="#d7ecfb" stroke-width="1.500"/><rect x="8" y="13" width="15" height="10" rx="1.500" fill="#a9b9c8"/><path d="M12 13v-2.500h7V13M8 17.500h15" stroke="#6f8191" stroke-width="1.400"/>`);
    const npp = icon(24, 24, "0 0 24 24", svg`<rect x="3" y="2" width="17" height="20" fill="#e9f3e0"/><path d="M4 9h15v12H4z" fill="#7cc242"/><path d="M7 12v6M11 12v6M7 15h7" stroke="#fff" stroke-width="1.500"/><path d="m21 2-7 12" stroke="#c7a227" stroke-width="2.400"/>`);
    const list: [unknown, string][] = [[winlogo(15), ""], [lens(15, "#fff"), ""], [taskview(14), ""], [ie, ""], [explorer(20), "run"], [wrench, ""], [server, "run"], [chrome(22), "act"], [xampp(21), "run"], [dbtools(21), "run"], [npp, "run"], [notepad(21), "run"]];
    return html`<div class="tb1">
      ${list.map(([i, c]) => html`<span class="cell ${c}">${i}</span>`)}
      <div class="tray">
        <span style="margin-right:9px">${up()}</span>${xampp(14)}<span style="margin-left:7px">${net(14)}</span><span style="margin-left:7px">${mute(true)}</span>
        <span style="margin:0 12px 0 9px">${icon(15, 14, "0 0 15 14", svg`<path d="M1.500 10.500c0-3 4.500-3 4 0-.5 2.500-4 2.500-4 0zM5 12c2-1 4.500-5 5-8.500.5-2.500 3-2.500 2.500 0-.5 3-4 7-7 8.500M8 4.500c3-.5 5.500 0 6 1.500" stroke="#ddd" stroke-width="1.200"/>`)}</span>
        <span style="font-size:11px">${fit("ENG", 20)}</span>
        <span class="clock" style="margin-left:8px">${fit("14:35", 23)}${fit("13/02/2023", 50)}</span>
        <span style="margin:0 17px 0 13px">${notif(15)}</span><span class="peek" style="height:35px;margin-right:3px"></span>
      </div>
    </div>`;
  }

  private outerTaskbar() {
    const edge = icon(25, 25, "0 0 24 24", svg`<circle cx="12" cy="12" r="11.500" fill="#1b85d8"/><path d="M1 9C3 1 20-3 23.300 9.500 24 15 17 16 15 14c1-1 1-5-3-6S3 7 1 9z" fill="#3fd0a0"/><path d="M1 9c4-3 10-2 11 0-4 1-4 8 2 10 3 1 6 .5 7.500-1C16 26 2 25 .7 13c-.1-1.500 0-3 .3-4z" fill="#1e8fe0"/><path d="M12 9c-3 2-3 8 2 10 3 1 6 .5 7.500-1-4 1.500-8-.5-8-3 0-1 1.500-1.500 1.500-3 0-1.300-1-2.500-3-3z" fill="#0f3f8c"/>`);
    const store = icon(24, 26, "0 0 24 26", svg`<path d="M7.500 7V2h9v5" stroke="#2e9de8" stroke-width="1.800"/><path d="M1 6h22v16a3 3 0 0 1-3 3H4a3 3 0 0 1-3-3z" fill="#fff"/><path d="M7 10h4.500v4.500H7z" fill="#f25022"/><path d="M12.500 10H17v4.500h-4.500z" fill="#7fba00"/><path d="M7 15.500h4.500V20H7z" fill="#00a4ef"/><path d="M12.500 15.500H17V20h-4.500z" fill="#ffb900"/>`);
    const vs = icon(24, 24, "0 0 24 24", svg`<path d="M17.500 0 24 3v18l-6.500 3L7 14l-4.500 3.500L.5 16.300 5 12 .5 7.700l2-1.200L7 10z" fill="#2196e3"/><path d="M17.800 6.500v11L10.500 12z" fill="#20333c"/><path d="M17.500 0 24 3v18l-6.500 3z" fill="#36a8f2"/>`);
    const chromeC = html`<svg class="ic" width="27" height="27" viewBox="0 0 27 27">${svg`<circle cx="12" cy="12" r="11.500" fill="#34a853"/><path d="M12 12 2.040 6.250A11.500 11.500 0 0 1 22 6.500H12z" fill="#ea4335"/><path d="M22 6.300A11.500 11.500 0 0 1 12 23.500L17 12V6.300z" fill="#fbbc04"/><path d="M2.040 6.250 7.200 15l4.800-3z" fill="#ea4335"/><circle cx="12" cy="12" r="5.600" fill="#fff"/><circle cx="12" cy="12" r="4.400" fill="#1a73e8"/><circle cx="18.500" cy="18.500" r="8" fill="#00897b"/><text x="18.500" y="22" font-family="Open Sans" font-size="10" text-anchor="middle" fill="#fff">C</text>`}</svg>`;
    const art = icon(77, 38, "0 0 77 38", svg`
      <path d="M20 34V11l7 4 7-3 8 6 8-6 10 3 8-4 9 4v23H20z" fill="#b5622c"/><path d="M20 11v23l7-9V15zM34 12v16l7-4v-6zM50 12v14l9 3V15zM68 11v20l9 4V15z" fill="#dd8b4d"/><path d="m27 15 0 13 7-4V12zM60 15v13l8-5V11z" fill="#8e4a25"/>
      <path d="M0 38c3-8 9-14 16-15 7 2 9 8 14 9l8 6z" fill="#9c5230"/><path d="M8 38c2-6 4-10 9-14l5 8-4 6z" fill="#c97a45"/><path d="M28 38c6-9 12-12 20-12s16 3 29 0v12z" fill="#ddc9cd"/><path d="M40 38c4-7 8-9 14-11l-5 11zM62 38c2-5 6-9 12-10l-4 10z" fill="#a98f9e"/>
      <path d="M1 16a4 4 0 0 1 4-4 5 5 0 0 1 8 2 3 3 0 0 1 1 4H3z" fill="#efc3c4"/><path d="M25 8a4 4 0 0 1 4-3 6 6 0 0 1 10 1 3.500 3.500 0 0 1 2 6H27z" fill="#edbcbd"/>`);
    const weather = icon(26, 26, "0 0 26 26", svg`<path d="m12 1 2 7 5 4-9 4-8-3 6-3z" fill="#f5a623"/><circle cx="21.500" cy="4" r="3.200" fill="#d52b1e"/><path d="M6 24a5.500 5.500 0 0 1 0-11 7.500 7.500 0 0 1 13.500-1 6 6 0 0 1 .5 12z" fill="#b7d2fb"/><path d="M2 21c6-3 16-3 23-1-1 2.500-2.500 4-5 4H6c-2 0-3.500-1-4-3z" fill="#86b1f2"/>`);
    const list: [unknown, string][] = [[taskview(17), ""], [edge, "run"], [explorer(22), "run"], [store, "run"], [dbtools(22), "run"], [vs, "run"], [chromeC, "act"], [xampp(25), "run"], [notepad(23), "run"]];
    const meet = icon(14, 16, "0 0 14 16", svg`<rect x="1.500" y="4.500" width="8" height="7" rx="1.500" stroke="#fff" stroke-width="1.200"/><path d="m9.500 8 3-2.500v5zM3 1.500C5 .4 9 .4 11 1.500M3 14.500c2 1.100 6 1.100 8 0" stroke="#fff" stroke-width="1.100"/>`);
    return html`<div class="tb2">
      <span class="cell start">${winlogo(16)}</span>
      <div class="search">${lens(17, "#222")}${fit("Type here to search", 128)}<span class="art">${art}</span></div>
      ${list.map(([i, c]) => html`<span class="cell app ${c}">${i}</span>`)}
      <div class="tray">
        ${weather}<span style="margin-left:8px">${fit("17°C", 29)}</span><span style="margin:0 21px 0 9px">${fit("Mostly cloudy", 86)}</span>
        ${up()}<span style="margin-left:18px">${mute(false)}</span><span style="margin-left:19px">${meet}</span><span style="margin:0 14px 0 16px">${net(17)}</span>
        <span style="font-size:12px">${fit("ENG", 23)}</span><span class="clock" style="margin-left:12px">${fit("19:36", 26)}${fit("13/02/2023", 58)}</span>
        <span style="margin:0 19px 0 16px">${notif(17)}</span><span class="peek" style="height:40px;margin-right:4px"></span>
      </div>
    </div>`;
  }

  render() {
    return html`<div class="screen">
        ${this.chromeTop()}${this.bookmarks()}
        <div class="desk">
          <div class="win">${this.innerTop()}${this.page()}${this.innerTaskbar()}</div>
          ${this.modal()}${this.rdp()}
          <div class="toast">
            ${icon(41, 42, "0 0 41 42", svg`<circle cx="20.500" cy="21" r="18.700" stroke="#24241a" stroke-width="3.400"/><path d="M20.500 19v13M20.500 11v4.200" stroke="#24241a" stroke-width="4.200"/>`)}
            <div class="txt"><div class="ttl">${fit("Warning", 65.5)}</div><div class="sub">${fit("Developers are working on the system.", 216)}</div></div>
            <span class="close">${cross(9, "#3d3420", 1.8)}</span>
          </div>
          <div class="side-toggle">${icon(12, 18, "0 0 12 18", svg`<path d="M10 1.500 2.500 9l7.500 7.500" stroke="#4a4a4a" stroke-width="2.600"/>`)}</div>
        </div>
        ${this.outerTaskbar()}
      </div>
      <svg class="over" viewBox="0 0 1920 1080">
        ${MARKS.map(([x, y]) => svg`<g font-family="DejaVu Sans, sans-serif" font-size="23" fill="#fff" fill-opacity=".07" stroke="#a6a6a6" stroke-opacity=".42" stroke-width="1.300">
          <text x=${x - 203} y=${y + 8.5} textLength="405" lengthAdjust="spacingAndGlyphs">!customs-wareshussai@healthirl.net</text>
          <text x=${x - 102} y=${y + 39} textLength="204" lengthAdjust="spacingAndGlyphs">2023/02/13 12:40</text></g>`)}
        <g fill="#fff" fill-opacity=".25" font-family="Open Sans, sans-serif">
          <text x="1599" y="965" font-size="19.500" textLength="157" lengthAdjust="spacingAndGlyphs">Activate Windows</text>
          <text x="1599" y="986" font-size="15" textLength="236" lengthAdjust="spacingAndGlyphs">Go to Settings to activate Windows.</text>
        </g>
      </svg>`;
  }
}
